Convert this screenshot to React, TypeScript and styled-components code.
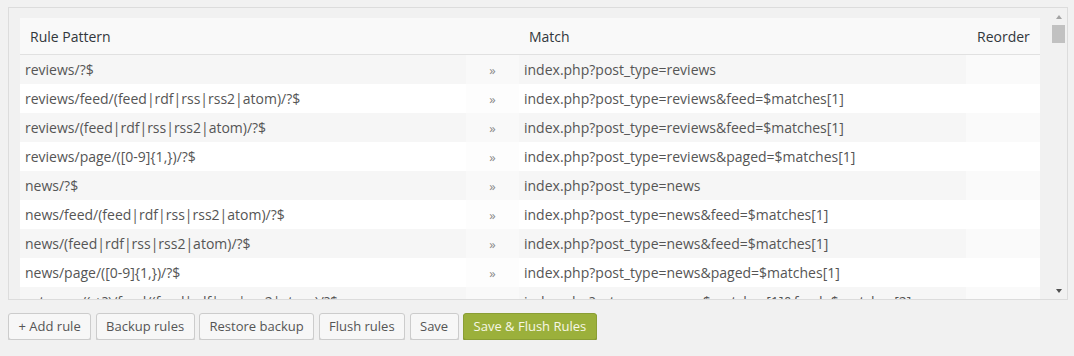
import React from "react";
import styled, { createGlobalStyle } from "styled-components";

const GlobalStyle = createGlobalStyle`
  html, body { margin: 0; padding: 0; background: #f1f1f1; }
  body { font-family: "Open Sans", "Noto Sans", sans-serif; color: #444; }
`;

const Page = styled.div`
  padding: 7px 6px 0 8px;
`;

const RulesBox = styled.div`
  display: flex;
  box-sizing: border-box;
  height: 293px;
  border: 1px solid #dcdcdc;
  background: #f1f1f1;
`;

const Viewport = styled.div`
  flex: 1;
  overflow: hidden;
  padding: 10px 10px 0 11px;
`;

const Table = styled.table`
  width: 1020px;
  border-collapse: separate;
  border-spacing: 0;
  table-layout: fixed;
  background: #fff;
`;

const HeadCell = styled.th<{ $align?: string }>`
  height: 36px;
  padding: 0 ${(p) => (p.$align === "right" ? "11px" : "10px")};
  text-align: ${(p) => p.$align || "left"};
  font-weight: 400;
  font-size: 14px;
  color: #32373c;
  background: #f9f9f9;
  border-bottom: 1px solid #e1e1e1;
`;

const Row = styled.tr<{ $odd: boolean }>`
  height: 29px;
  background: ${(p) => (p.$odd ? "#f6f6f6" : "#fff")};
`;

const Cell = styled.td`
  padding: 0 5px;
  font-size: 14px;
  color: #555;
  white-space: nowrap;
  overflow: hidden;
`;

const ArrowCell = styled.td<{ $odd: boolean }>`
  padding: 0;
  text-align: center;
  font-size: 13px;
  color: #8a8a8a;
  background: ${(p) => (p.$odd ? "#f9f9f9" : "#fdfdfd")};
`;

const ReorderCell = styled.td<{ $odd: boolean }>`
  padding: 0;
  background: ${(p) => (p.$odd ? "#fafafa" : "#fff")};
`;

const Scrollbar = styled.div`
  width: 17px;
  display: flex;
  flex-direction: column;
  background: #f1f1f1;
`;

const ScrollButton = styled.div`
  height: 17px;
  display: flex;
  align-items: center;
  justify-content: center;
`;

const Triangle = styled.div<{ $down?: boolean }>`
  width: 0;
  height: 0;
  border-left: 3.5px solid transparent;
  border-right: 3.5px solid transparent;
  ${(p) =>
    p.$down
      ? "border-top: 4px solid #505050;"
      : "border-bottom: 4px solid #a3a3a3;"}
`;

const Track = styled.div`
  flex: 1;
  padding: 0 2px;
`;

const Thumb = styled.div`
  height: 18px;
  background: #c1c1c1;
`;

const Toolbar = styled.div`
  display: flex;
  gap: 4.4px;
  margin-top: 13px;
`;

const Button = styled.button<{ $primary?: boolean }>`
  box-sizing: border-box;
  height: 27px;
  padding: 0 9.5px 1px;
  font-family: "Open Sans", "Noto Sans", sans-serif;
  font-size: 13px;
  line-height: 25px;
  border-radius: 3px;
  cursor: pointer;
  border: 1px solid ${(p) => (p.$primary ? "#8a9e35" : "#cccccc")};
  background: ${(p) => (p.$primary ? "#9bb03b" : "#f7f7f7")};
  color: ${(p) => (p.$primary ? "#f7f7e6" : "#555")};
  box-shadow: 0 1px 0 ${(p) => (p.$primary ? "#7f922f" : "#cccccc")};
`;

const rules: [string, string][] = [
  ["reviews/?$", "index.php?post_type=reviews"],
  ["reviews/feed/(feed|rdf|rss|rss2|atom)/?$", "index.php?post_type=reviews&feed=$matches[1]"],
  ["reviews/(feed|rdf|rss|rss2|atom)/?$", "index.php?post_type=reviews&feed=$matches[1]"],
  ["reviews/page/([0-9]{1,})/?$", "index.php?post_type=reviews&paged=$matches[1]"],
  ["news/?$", "index.php?post_type=news"],
  ["news/feed/(feed|rdf|rss|rss2|atom)/?$", "index.php?post_type=news&feed=$matches[1]"],
  ["news/(feed|rdf|rss|rss2|atom)/?$", "index.php?post_type=news&feed=$matches[1]"],
  ["news/page/([0-9]{1,})/?$", "index.php?post_type=news&paged=$matches[1]"],
  ["category/(.+?)/feed/(feed|rdf|rss|rss2|atom)/?$", "index.php?category_name=$matches[1]&feed=$matches[2]"],
  ["category/(.+?)/(feed|rdf|rss|rss2|atom)/?$", "index.php?category_name=$matches[1]&feed=$matches[2]"],
];

export default function App() {
  return (
    <Page>
      <GlobalStyle />
      <RulesBox>
        <Viewport>
          <Table>
            <colgroup>
              <col style={{ width: 446 }} />
              <col style={{ width: 53 }} />
              <col style={{ width: 447 }} />
              <col style={{ width: 74 }} />
            </colgroup>
            <thead>
              <tr>
                <HeadCell>Rule Pattern</HeadCell>
                <HeadCell />
                <HeadCell>Match</HeadCell>
                <HeadCell $align="right">Reorder</HeadCell>
              </tr>
            </thead>
            <tbody>
              {rules.map(([pattern, match], i) => {
                const odd = i % 2 === 0;
                return (
                  <Row key={i} $odd={odd}>
                    <Cell>{pattern}</Cell>
                    <ArrowCell $odd={odd}>»</ArrowCell>
                    <Cell>{match}</Cell>
                    <ReorderCell $odd={odd} />
                  </Row>
                );
              })}
            </tbody>
          </Table>
        </Viewport>
        <Scrollbar>
          <ScrollButton>
            <Triangle />
          </ScrollButton>
          <Track>
            <Thumb />
          </Track>
          <ScrollButton>
            <Triangle $down />
          </ScrollButton>
        </Scrollbar>
      </RulesBox>
      <Toolbar>
        <Button>+ Add rule</Button>
        <Button>Backup rules</Button>
        <Button>Restore backup</Button>
        <Button>Flush rules</Button>
        <Button>Save</Button>
        <Button $primary>Save &amp; Flush Rules</Button>
      </Toolbar>
    </Page>
  );
}
